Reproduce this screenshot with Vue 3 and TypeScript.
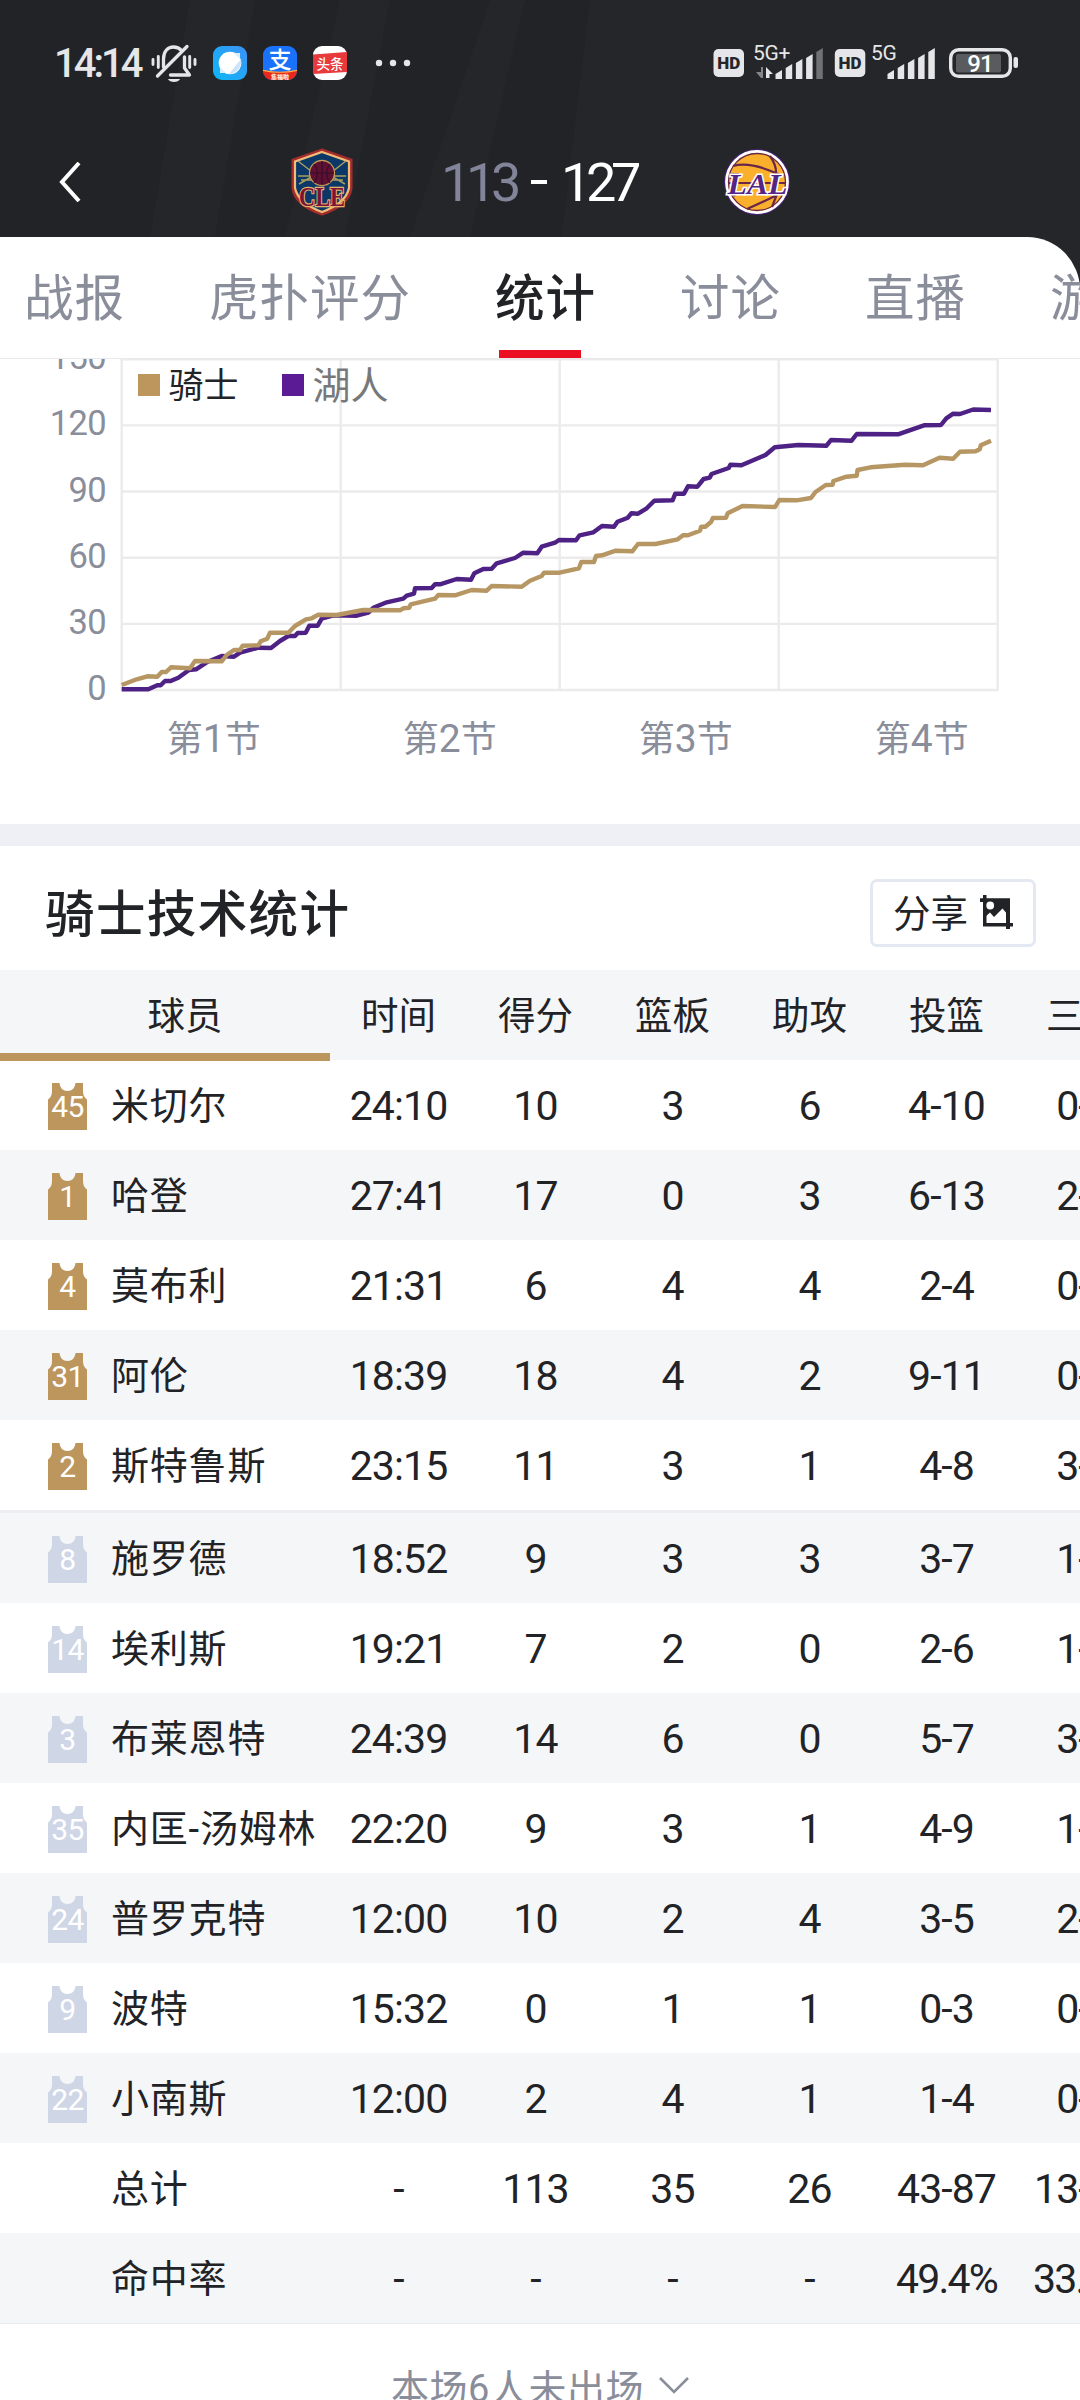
<template>
  <div class="page">
    <header class="top">
      <svg class="stripes" viewBox="0 0 1080 290" preserveAspectRatio="none">
        <path d="M190 0H255L215 237H150Z M340 0H390L345 237H285Z M490 0H525L470 237H410Z" />
        <path d="M590 0H1080V290H555Z" />
      </svg>
      <div class="status">
        <span class="clock">14:14</span>
        <svg class="bell" viewBox="0 0 46 40" fill="none" stroke="#e6e6e8" stroke-width="3.3" stroke-linecap="round">
          <path d="M2 15.500V20.500M7.300 12.500V23.500M38.700 12.500V23.500M44 15.500V20.500" stroke-width="2.900" />
          <path d="M12.500 23V15C12.500 7 17 3 22.500 3C26 3 28.500 4.300 30.500 6.500" />
          <path d="M33.500 13V24L38.500 31H19.500" stroke-linejoin="round" />
          <path d="M6.500 32L36 2.500" />
          <path d="M17 35H29C27.500 39 18.500 39 17 35Z" fill="#e6e6e8" stroke="none" />
        </svg>
        <svg class="app" viewBox="0 0 34 34">
          <defs>
            <linearGradient id="sky" x1="0" y1="1" x2="1" y2="0">
              <stop offset="0" stop-color="#0cb7f6" />
              <stop offset="1" stop-color="#3d92f5" />
            </linearGradient>
          </defs>
          <rect width="34" height="34" rx="9" fill="url(#sky)" />
          <circle cx="17" cy="17" r="11.300" fill="#fff" />
          <path d="M7 27V21L13 27ZM27 7V13L21 7Z" fill="#d8eefe" />
          <path d="M28 13C29 21 23 28 16 28Z" fill="#cbe3fb" />
        </svg>
        <svg class="app" viewBox="0 0 34 34">
          <defs>
            <clipPath id="tile"><rect width="34" height="34" rx="9" /></clipPath>
          </defs>
          <g clip-path="url(#tile)">
            <rect width="34" height="34" fill="#1a72fa" />
            <text x="17" y="22" font-size="23" font-weight="500" text-anchor="middle" fill="#fff">支</text>
            <path d="M0 24Q17 28 34 24V34H0Z" fill="#e8281b" />
            <path d="M0 23.800Q17 27.500 34 23.800V25Q17 28.700 0 25Z" fill="#ffb14a" />
            <text x="17" y="33" font-size="6" font-weight="700" text-anchor="middle" fill="#fff">集福啦</text>
          </g>
        </svg>
        <svg class="app" viewBox="0 0 34 34">
          <rect width="34" height="34" rx="9" fill="#fff" />
          <path d="M0 8.500L34 6V26L0 28Z" fill="#e8393c" />
          <text x="17" y="22.500" font-size="13.500" font-weight="500" text-anchor="middle" fill="#fff">头条</text>
        </svg>
        <svg class="dots" viewBox="0 0 36 8" fill="#e6e6e8">
          <circle cx="4" cy="4" r="3.200" /><circle cx="18" cy="4" r="3.200" /><circle cx="32" cy="4" r="3.200" />
        </svg>
        <svg class="signals" viewBox="713 42 308 42" fill="#e6e6e8">
          <g v-for="sim in sims" :key="sim.x">
            <rect :x="sim.x" y="49" width="30.500" height="28" rx="5" />
            <text :x="sim.x + 15.300" y="69" font-size="17" font-weight="900" text-anchor="middle" fill="#25262a">HD</text>
            <text :x="sim.labelX" y="59.500" font-size="21" font-weight="400" letter-spacing="-0.300">{{ sim.label }}</text>
            <path
              v-for="(top, i) in barTops"
              :key="i"
              :d="`M${sim.barX + i * 10.200} ${top + 4}L${sim.barX + i * 10.200 + 6.500} ${top}V79H${sim.barX + i * 10.200}Z`"
              :fill="i >= sim.level ? '#707174' : '#e6e6e8'"
            />
          </g>
          <path d="M761 67V78H763V67ZM756 72L761 78V72Z" fill="#85868a" />
          <path d="M766 78V67L773 74H769.500V78Z" />
          <rect x="950.700" y="49.700" width="59.600" height="26.600" rx="8" fill="none" stroke="#e6e6e8" stroke-width="3.400" />
          <rect x="956" y="54" width="45" height="18.500" rx="2" fill="#5a5b5e" />
          <rect x="1013.500" y="57" width="4.500" height="11" rx="2" />
          <text x="980" y="72" font-size="24" font-weight="500" letter-spacing="-1" text-anchor="middle" fill="#fff">91</text>
        </svg>
      </div>
      <div class="score-bar">
        <svg class="back" viewBox="0 0 22 40" fill="none" stroke="#fff" stroke-width="4">
          <path d="M20 1L3 20L20 39" />
        </svg>
        <svg class="cle" viewBox="0 0 62 68">
          <path d="M31 2L60 12V40Q58 57 31 66Q4 57 2 40V12Z" fill="#0b3866" stroke="#a52c2c" stroke-width="3" />
          <path d="M31 4L58 13.500V40Q55 55 31 64Q7 55 4 40V13.500Z" fill="none" stroke="#f3bd77" stroke-width="2.200" />
          <path d="M7 13L25 27M55 13L37 27M7 28H22L8 36M55 28H40L54 36M10 32H52" stroke="#a99d60" stroke-width="1.500" fill="none" />
          <circle cx="31" cy="25" r="12.500" fill="#5e1132" stroke="#c39a55" stroke-width="1.300" />
          <path d="M19 25H43M31 13V37M23 16Q30 25 23 35M39 16Q32 25 39 35" stroke="#350e28" stroke-width="1.200" fill="none" />
          <text x="31" y="58" class="cle-text" text-anchor="middle" textLength="46" lengthAdjust="spacingAndGlyphs">CLE</text>
        </svg>
        <span class="score away">113</span>
        <span class="dash"></span>
        <span class="score">127</span>
        <svg class="lal" viewBox="0 0 68 68">
          <circle cx="34" cy="34" r="33" fill="#48207a" />
          <circle cx="34" cy="34" r="30.500" fill="#fbb02d" stroke="#fff" stroke-width="2.800" />
          <g fill="none" stroke="#6a2748" stroke-width="2.200">
            <circle cx="34" cy="34" r="28.500" stroke-width="1.300" />
            <path d="M10 18Q28 13 57 27M47 8Q54 18 53 27M6 35H62M7 26H16M7 30H14M24 61Q40 54 54 47M49 59L54 46M7 42L12 48" />
          </g>
          <text x="34.500" y="46" class="lal-text" text-anchor="middle" textLength="60" lengthAdjust="spacingAndGlyphs">LAL</text>
        </svg>
      </div>
    </header>

    <nav class="tabs">
      <div v-for="tab in tabs" :key="tab" class="tab" :class="{ active: tab === activeTab }" @click="activeTab = tab">{{ tab }}</div>
    </nav>

    <svg class="chart" viewBox="0 359 1080 465">
      <g stroke="#ebebed" stroke-width="2.400">
        <line v-for="n in 6" :key="'h' + n" x1="121" x2="998" :y1="scoreY((n - 1) * 30)" :y2="scoreY((n - 1) * 30)" />
        <line v-for="n in 5" :key="'v' + n" :x1="121.700 + (n - 1) * 219" :x2="121.700 + (n - 1) * 219" y1="359" y2="691" />
      </g>
      <g class="axis">
        <text v-for="n in 6" :key="n" x="106" :y="scoreY((n - 1) * 30) + 10" text-anchor="end">{{ (n - 1) * 30 }}</text>
      </g>
      <g class="quarter">
        <text v-for="n in 4" :key="n" :x="213.700 + (n - 1) * 236" y="752" text-anchor="middle">第<tspan class="digit">{{ n }}</tspan>节</text>
      </g>
      <rect x="138" y="374" width="22" height="22" fill="#bc965c" />
      <text x="168.500" y="397.500" font-size="35" fill="#222326">骑士</text>
      <rect x="282" y="374" width="22" height="22" fill="#5b1b95" />
      <text x="312.500" y="399" font-size="38" fill="#77787a">湖人</text>
      <polyline :points="lakersLine" class="line" stroke="#4e2185" />
      <polyline :points="cavsLine" class="line" stroke="#b69662" />
    </svg>

    <section class="stats">
      <div class="stats-head">
        <h2>骑士技术统计</h2>
        <button class="share">
          <span>分享</span>
          <svg viewBox="0 0 33 34">
            <path d="M3 0H6.500V28H33V31.500H3Z M0 3.200H30V34H26V7H0Z" fill="#222326" />
            <path d="M5 4H28V20L22.500 13.500L14 22L10 17.500L5 22Z" fill="#222326" />
            <circle cx="10.200" cy="10.500" r="3.900" fill="#fff" />
          </svg>
        </button>
      </div>

      <div class="row head">
        <div class="name-cell">球员</div>
        <div v-for="c in columns" :key="c" class="cell">{{ c }}</div>
      </div>
      <div v-for="(p, i) in players" :key="p.name" class="row" :class="{ alt: i % 2 === 1, split: i === 5 }">
        <div class="name-cell">
          <svg v-if="p.no" class="jersey" viewBox="0 0 39 47">
            <path
              d="M4 0H11.500C12 5 15 8 19.500 8S27 5 27.500 0H35V8Q35 14 39 16.500V47H0V16.500Q4 14 4 8Z"
              :fill="i < 5 ? '#bc965c' : '#cfd6e6'"
            />
            <text x="19.500" y="33.500" text-anchor="middle">{{ p.no }}</text>
          </svg>
          <span v-else class="jersey"></span>
          <span class="name">{{ p.name }}</span>
        </div>
        <div v-for="(v, k) in p.stats" :key="k" class="cell num" :class="{ percent: v.includes('%') }">{{ v }}</div>
      </div>

      <div class="more">
        <span>本场6人未出场</span>
        <svg viewBox="0 0 30 18" fill="none" stroke="#8a8d9a" stroke-width="2.600"><path d="M1 2L15 16L29 2" /></svg>
      </div>
    </section>
  </div>
</template>

<script setup lang="ts">
import { ref } from 'vue'

interface Player {
  no: string
  name: string
  stats: string[]
}

const tabs = ['战报', '虎扑评分', '统计', '讨论', '直播', '游戏']
const activeTab = ref('统计')

const sims = [
  { x: 713.5, label: '5G+', labelX: 753, barX: 775.5, level: 4 },
  { x: 834.8, label: '5G', labelX: 871, barX: 887.5, level: 5 },
]
const barTops = [70, 64, 59, 54, 48]

const columns = ['时间', '得分', '篮板', '助攻', '投篮', '三分']

const players: Player[] = [
  { no: '45', name: '米切尔', stats: ['24:10', '10', '3', '6', '4-10', '0-4'] },
  { no: '1', name: '哈登', stats: ['27:41', '17', '0', '3', '6-13', '2-6'] },
  { no: '4', name: '莫布利', stats: ['21:31', '6', '4', '4', '2-4', '0-1'] },
  { no: '31', name: '阿伦', stats: ['18:39', '18', '4', '2', '9-11', '0-0'] },
  { no: '2', name: '斯特鲁斯', stats: ['23:15', '11', '3', '1', '4-8', '3-6'] },
  { no: '8', name: '施罗德', stats: ['18:52', '9', '3', '3', '3-7', '1-3'] },
  { no: '14', name: '埃利斯', stats: ['19:21', '7', '2', '0', '2-6', '1-4'] },
  { no: '3', name: '布莱恩特', stats: ['24:39', '14', '6', '0', '5-7', '3-5'] },
  { no: '35', name: '内匡-汤姆林', stats: ['22:20', '9', '3', '1', '4-9', '1-3'] },
  { no: '24', name: '普罗克特', stats: ['12:00', '10', '2', '4', '3-5', '2-3'] },
  { no: '9', name: '波特', stats: ['15:32', '0', '1', '1', '0-3', '0-2'] },
  { no: '22', name: '小南斯', stats: ['12:00', '2', '4', '1', '1-4', '0-2'] },
  { no: '', name: '总计', stats: ['-', '113', '35', '26', '43-87', '13-39'] },
  { no: '', name: '命中率', stats: ['-', '-', '-', '-', '49.4%', '33.3%'] },
]

function scoreY(score: number) {
  return 690 - score * 2.205
}

const cavsLine =
  '121.7,685 136.7,679.3 147.3,676.3 157.3,676.7 161.7,672 166,672 171,667.3 190,668.3 195,661 221.7,661.3 226.7,655 234,650 240,650 ' +
  '242.7,645.7 258.3,645.3 260.7,641.3 267.3,638.7 270,632.7 288.3,632.7 295,626 306,619.3 311.7,618.3 318.3,614.7 336.7,615 363.3,610 ' +
  '400,610.3 403.3,608.3 409.3,607.7 410.7,604.3 435,598.7 438.3,595 455,595.3 471.7,590 486.7,590.7 491.7,586 521.7,586.7 530,580.7 ' +
  '541.7,576 544,572.7 559.6,572.7 578.9,568.3 581.3,562 594,562 596,556 602,555.3 615.8,550.7 632.3,551.3 638,544 655.4,544 ' +
  '677.7,539.3 683,535.3 688,535.3 700,530.7 701.2,526.7 705.3,526.7 711,522 712.9,518 726,517.7 727.7,513.3 742.5,506 775.2,507 ' +
  '779.3,500 796.5,500.3 811,498 815.5,492 825.8,485 832.7,484.7 833.4,481 846.5,476.7 856.8,475.7 857.5,470 870.6,467.3 905,464.7 ' +
  '923,465.3 939.5,457.7 953.2,458.7 960,451.7 975.6,451.3 979.7,449.3 980.8,445.3 991,440.7'

const lakersLine =
  '121.7,689.3 148.3,689.3 157.3,685.3 160.7,685.3 165,681 170.7,681 178.3,677.7 189,670 196,669.3 206.7,662.3 221.7,656 234,656.7 ' +
  '240,652.7 258.3,647.7 271,648 280,641 288.3,636 295,636 297.7,633 305.7,632.7 309.3,625.7 317.7,625.7 321.7,618.7 333.3,615.3 ' +
  '356.7,615.7 368.3,612.7 373.3,607.7 386.7,602.3 403.3,598.7 406.7,595.7 414,593.7 415,588.3 431.7,588 435,584.3 440,584.3 456.7,579 ' +
  '471,579.7 474.3,573.3 483.3,569 491.7,568.7 496.7,563.3 515,558 523.3,552.7 537.3,553.3 541.7,546.7 555,542.7 559,540 576,540.3 ' +
  '579.6,535.3 593.4,532.3 602,526 614,526.7 617.5,521.7 627.8,517.7 631.3,513.3 638,513.7 646.7,508.3 654.3,500.7 672.6,500.3 ' +
  '675.3,493.7 684,493.7 688,486.3 697.4,486.7 703.6,479 709.8,477.7 711.5,474 728.7,468 730.4,464.7 741.4,465.3 765.5,455 ' +
  '774.8,447.3 798.3,445 826.5,445.7 831,440 851.6,440.7 856.8,434 898,434.3 924,425.3 941,425 946.3,418.3 953.2,413.7 960,414 ' +
  '973.2,409.5 991,410'
</script>

<style>
body {
  background: #fff;
}
</style>

<style scoped>
.page {
  width: 1080px;
  height: 2400px;
  overflow: hidden;
  background: #fff;
  color: #222326;
  font-family: Roboto, "Noto Sans CJK SC", sans-serif;
}

svg {
  display: block;
  flex: none;
}

.top {
  position: relative;
  height: 290px;
  margin-bottom: -53px;
  background: #222327;
}

.stripes {
  position: absolute;
  inset: 0;
  width: 1080px;
  height: 290px;
  fill: #25262a;
}

.status {
  position: relative;
  display: flex;
  align-items: center;
  height: 126px;
  padding-left: 54px;
}

.clock {
  width: 97px;
  font-size: 40px;
  font-weight: 500;
  letter-spacing: -3px;
  color: #e6e6e8;
}

.bell {
  width: 46px;
  height: 40px;
  margin-top: 2px;
}

.app {
  width: 34px;
  height: 34px;
  margin-left: 16px;
}

.dots {
  width: 36px;
  height: 8px;
  margin-left: 28px;
}

.signals {
  width: 308px;
  height: 42px;
  margin-left: 302px;
}

.score-bar {
  position: relative;
  display: flex;
  align-items: center;
  height: 111px;
  padding-left: 59px;
}

.back {
  width: 22px;
  height: 40px;
}

.cle {
  width: 62px;
  height: 68px;
  margin-left: 210px;
}

.cle-text {
  font: 700 28px "Liberation Serif", serif;
  fill: #7c1236;
  stroke: #e2b46c;
  stroke-width: 2.4px;
  paint-order: stroke;
}

.lal-text {
  font: italic 700 30px "Liberation Serif", serif;
  fill: #542585;
  stroke: #fff;
  stroke-width: 3px;
  paint-order: stroke;
}

.score {
  width: 93px;
  margin-top: 2px;
  font-size: 54px;
  letter-spacing: -5.4px;
  color: #fff;
}

.away {
  margin-left: 88px;
  width: 90px;
  color: #82859a;
}

.dash {
  width: 16px;
  height: 4px;
  margin-right: 14px;
  background: #fff;
}

.lal {
  width: 68px;
  height: 68px;
  margin-left: 69px;
}

.tabs {
  position: relative;
  display: flex;
  gap: 84px;
  box-sizing: border-box;
  width: 1080px;
  height: 122px;
  padding-left: 24px;
  overflow: hidden;
  background: #fff;
  border-bottom: 1px solid #e9e9ec;
  border-top-right-radius: 53px;
}

.tab {
  position: relative;
  flex: none;
  height: 121px;
  font-size: 49.5px;
  letter-spacing: 1px;
  line-height: 124px;
  color: #8a8d9a;
  white-space: nowrap;
}

.active {
  font-weight: 500;
  color: #222326;
}

.active::after {
  content: "";
  position: absolute;
  left: 4px;
  bottom: 0;
  width: 82px;
  height: 8px;
  background: #ea0f22;
}

.chart {
  width: 1080px;
  height: 465px;
}

.axis {
  font-size: 34.5px;
  letter-spacing: -0.6px;
  fill: #8a8d9a;
}

.quarter {
  font-size: 36px;
  fill: #8a8d9a;
}

.digit {
  font-size: 39px;
}

.line {
  fill: none;
  stroke-width: 4.4;
  stroke-linejoin: round;
}

.stats {
  border-top: 22px solid #eef0f5;
}

.stats-head {
  display: flex;
  align-items: center;
  justify-content: space-between;
  box-sizing: border-box;
  height: 124px;
  padding: 9px 44px 0 45px;
}

h2 {
  margin: -5px 0 0;
  font-size: 49.5px;
  font-weight: 500;
  letter-spacing: 1.4px;
}

.share {
  display: flex;
  align-items: center;
  justify-content: center;
  gap: 12px;
  box-sizing: border-box;
  width: 166px;
  height: 68px;
  padding: 0 0 2px;
  border: 3px solid #e4e8f3;
  border-radius: 7px;
  background: #fff;
  color: #222326;
  font: inherit;
  font-size: 37.5px;
}

.share span {
  margin-top: -3px;
}

.share svg {
  width: 33px;
  height: 34px;
}

.row {
  display: flex;
  height: 90px;
  line-height: 92px;
  font-size: 37.5px;
}

.alt,
.head {
  background: #f5f6f8;
}

.split {
  border-top: 3px solid #eceef1;
}

.name-cell {
  display: flex;
  align-items: center;
  flex: none;
  box-sizing: border-box;
  width: 330px;
  height: 90px;
  padding-left: 48px;
  white-space: nowrap;
}

.head .name-cell {
  justify-content: center;
  height: 91px;
  padding-top: 8px;
  padding-left: 40px;
  border-bottom: 8px solid #bc965c;
}

.jersey {
  width: 39px;
  height: 47px;
  margin-top: 2px;
  font-size: 30px;
  fill: #fff;
  letter-spacing: -0.5px;
}

.name {
  padding-top: 2px;
  margin-left: 24px;
  font-size: 38px;
  letter-spacing: 0.8px;
}

.cell {
  flex: none;
  width: 137px;
  text-align: center;
}

.num {
  font-size: 41px;
  letter-spacing: -0.9px;
}

.percent {
  letter-spacing: -1.8px;
}

.more {
  display: flex;
  align-items: center;
  justify-content: center;
  gap: 15px;
  height: 122px;
  border-top: 1px solid #e8ebee;
  font-size: 38px;
  letter-spacing: 0.5px;
  color: #8a8d9a;
}

.more svg {
  width: 30px;
  height: 18px;
}
</style>
